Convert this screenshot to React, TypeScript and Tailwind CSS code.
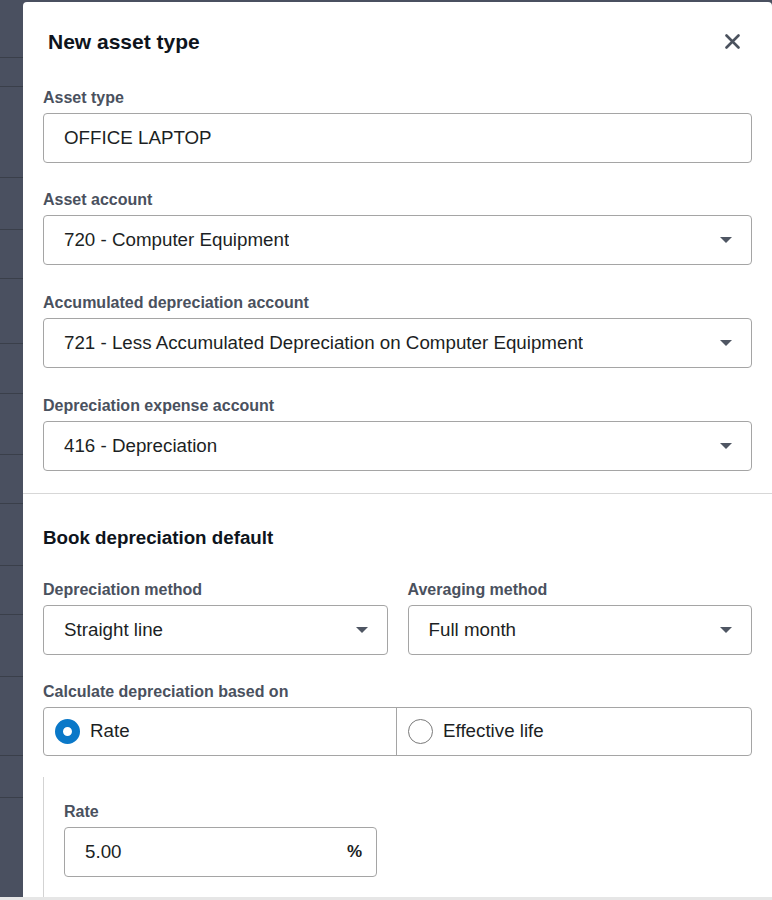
import React from "react";

// rows of the table sitting behind the drawer
const backdropRows = [
  "h-[58px]",
  "h-[29px]",
  "h-[91px]",
  "h-[52px]",
  "h-[49px]",
  "h-[65px]",
  "h-[50px]",
  "h-[61px]",
  "h-[49px]",
  "h-[62px]",
  "h-[49px]",
  "h-[62px]",
  "h-[79px]",
  "h-[42px]",
];

const Caret = () => (
  <svg width="12" height="6" viewBox="0 0 12 6" className="shrink-0">
    <polygon points="0,0 12,0 6,6" fill="#4f5663" />
  </svg>
);

const FieldLabel = ({ children }: { children: React.ReactNode }) => (
  <div className="mb-[5px] text-[16px] font-bold leading-5 text-[#4a515e]">{children}</div>
);

const SelectBox = ({ value }: { value: string }) => (
  <div className="flex h-[50px] items-center justify-between rounded border border-[#a5a5a5] pl-5 pr-[19px] text-[18.75px] text-[#1c1f24]">
    <span className="truncate">{value}</span>
    <Caret />
  </div>
);

const App = () => {
  return (
    <div className="relative flex h-[900px] w-full overflow-hidden bg-[#4a5060] font-['Liberation_Sans',Arial,sans-serif]">
      {/* Backdrop strip */}
      <div className="flex w-[23px] shrink-0 flex-col">
        {backdropRows.map((h, i) => (
          <div key={i} className={`${h} border-b border-[#3a3f4a]`} />
        ))}
      </div>

      {/* Drawer */}
      <div className="mt-[2px] flex flex-1 flex-col rounded-t-[4px] bg-white">
        <div className="flex h-[79px] shrink-0 items-center justify-between pl-[25px] pr-[32px]">
          <h2 className="text-[21px] font-bold text-[#0e141c]">New asset type</h2>
          <button className="flex h-[16px] w-[16px] items-center justify-center">
            <svg width="15" height="15" viewBox="0 0 15 15">
              <path d="M1.5 1.5 L13.5 13.5 M13.5 1.5 L1.5 13.5" stroke="#4b525e" strokeWidth="2.6" strokeLinecap="round" />
            </svg>
          </button>
        </div>

        <div className="flex flex-col gap-[28px] px-5 pb-[22px] pt-[7px]">
          <div>
            <FieldLabel>Asset type</FieldLabel>
            <div className="flex h-[50px] items-center rounded border border-[#a5a5a5] pl-5 text-[18.75px] text-[#1c1f24]">
              OFFICE LAPTOP
            </div>
          </div>
          <div className="-mt-[1px]">
            <FieldLabel>Asset account</FieldLabel>
            <SelectBox value="720 - Computer Equipment" />
          </div>
          <div>
            <FieldLabel>Accumulated depreciation account</FieldLabel>
            <SelectBox value="721 - Less Accumulated Depreciation on Computer Equipment" />
          </div>
          <div>
            <FieldLabel>Depreciation expense account</FieldLabel>
            <SelectBox value="416 - Depreciation" />
          </div>
        </div>

        <div className="border-t border-[#d7d7d7] px-5 pt-[32px]">
          <h3 className="text-[18.75px] font-bold leading-6 text-[#0e141c]">Book depreciation default</h3>

          <div className="mt-[30px] grid grid-cols-2 gap-5">
            <div>
              <FieldLabel>Depreciation method</FieldLabel>
              <SelectBox value="Straight line" />
            </div>
            <div>
              <FieldLabel>Averaging method</FieldLabel>
              <SelectBox value="Full month" />
            </div>
          </div>

          <div className="mt-[27px]">
            <FieldLabel>Calculate depreciation based on</FieldLabel>
            <div className="grid h-[49px] grid-cols-[353px_1fr] rounded border border-[#a5a5a5] text-[18.75px] text-[#1c1f24]">
              <label className="flex items-center gap-[10px] border-r border-[#a5a5a5] pl-[11px]">
                <span className="h-[25px] w-[25px] rounded-full border-[8px] border-[#0a78c8] bg-white" />
                Rate
              </label>
              <label className="flex items-center gap-[10px] pl-[11px]">
                <span className="h-[25px] w-[25px] rounded-full border border-[#7a7a7a] bg-white" />
                Effective life
              </label>
            </div>
          </div>

          <div className="mt-[21px] border-l border-[#d3d3d3] pb-10 pl-5 pt-[25px]">
            <FieldLabel>Rate</FieldLabel>
            <div className="flex h-[50px] w-[313px] items-center justify-between rounded border border-[#a5a5a5] pl-5 pr-[14px] text-[18.75px] text-[#1c1f24]">
              <span>5.00</span>
              <span className="text-[17px] font-bold text-[#1c1f24]">%</span>
            </div>
          </div>
        </div>
      </div>

      {/* bottom edge bar */}
      <div className="absolute bottom-0 left-0 h-[3px] w-full bg-[#e6e6e6]" />
    </div>
  );
};

export default App;
